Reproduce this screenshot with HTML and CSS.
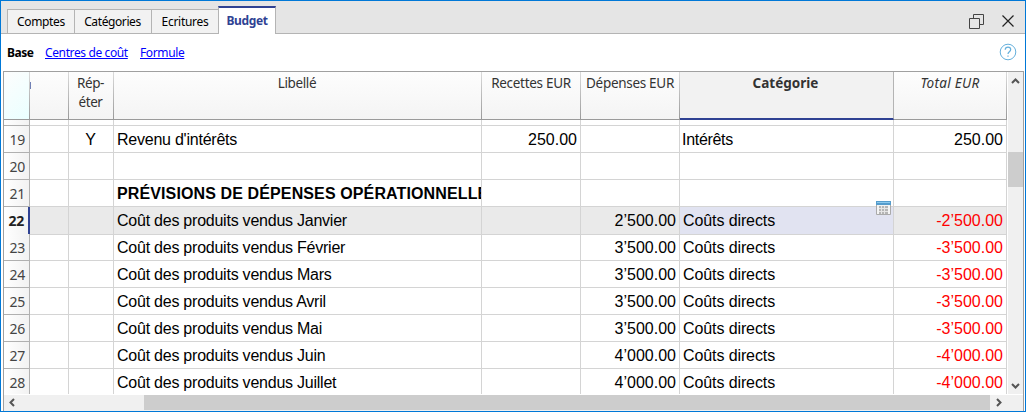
FILE: index.html
```html
<!DOCTYPE html>
<html lang="fr">
<head>
<meta charset="utf-8">
<title>Budget</title>
<link rel="stylesheet" href="styles.css">
</head>
<body>
<div class="window">
  <header class="tabbar">
    <nav class="tabs">
      <div class="tab t-comptes"><span>Comptes</span></div>
      <div class="tab t-categories"><span>Catégories</span></div>
      <div class="tab t-ecritures"><span>Ecritures</span></div>
      <div class="tab active"><span>Budget</span></div>
    </nav>
    <div class="controls">
      <svg width="16" height="16" viewBox="0 0 16 16" fill="none" stroke="#444"><path d="M.5 4.500h10v10H.5zM4.500 4.500v-4h10v10h-4"/></svg>
      <svg width="12" height="12" viewBox="0 0 12 12" fill="none" stroke="#222" stroke-width="1.200"><path d="M.5.5l11 11M11.500.5l-11 11"/></svg>
    </div>
  </header>
  <div class="views">
    <b>Base</b><a class="v-centres">Centres de coût</a><a class="v-formule">Formule</a>
    <svg class="help" width="18" height="18" viewBox="0 0 18 18" fill="none" stroke="#65b0dc"><circle cx="9" cy="9" r="7.800"/><path d="M6.200 6.800C6.300 5 7.400 4.200 9 4.200s2.700.9 2.700 2.300c0 2.300-2.700 2.100-2.700 4.500M9 12.500v1.300" stroke-width="1.200"/></svg>
  </div>
  <div class="panel">
    <div class="grid">
      <div class="row head">
        <div class="corner"></div><div><i class="cut"></i></div><div class="rep">Rép-<br>éter</div><div class="lib">Libellé</div><div>Recettes EUR</div><div>Dépenses EUR</div><div class="cur">Catégorie</div><div class="tot">Total EUR</div>
      </div>
      <div class="row part"><div class="n"></div><div></div><div></div><div></div><div></div><div></div><div></div><div></div></div>
      <div class="row"><div class="n">19</div><div></div><div class="c">Y</div><div class="t">Revenu d'intérêts</div><div class="r">250.00</div><div class="r"></div><div class="i">Intérêts</div><div class="r">250.00</div></div>
      <div class="row"><div class="n">20</div><div></div><div></div><div></div><div></div><div></div><div></div><div></div></div>
      <div class="row"><div class="n">21</div><div></div><div></div><div class="title">PRÉVISIONS DE DÉPENSES OPÉRATIONNELLES</div><div></div><div></div><div></div><div></div></div>
      <div class="row selected"><div class="n">22</div><div></div><div></div><div class="t">Coût des produits vendus Janvier</div><div></div><div class="r">2’500.00</div><div class="k cell">Coûts directs
        <svg class="picker" width="15" height="14" viewBox="0 0 15 14"><path d="M.5.5h14v13H.5z" fill="#f4f4f4" stroke="#aaa"/><path d="M0 0h15v4H0z" fill="#559ccc"/><path d="M1 1h13v1H1z" fill="#8bc9ed"/><path d="M3 5h9v8H3z" fill="#b5b5b5"/><path d="M3 7.500h9M3 10.500h9M5.500 5v8M8.500 5v8" stroke="#e5e5e5"/></svg></div><div class="r neg">-2’500.00</div></div>
      <div class="row"><div class="n">23</div><div></div><div></div><div class="t">Coût des produits vendus Février</div><div></div><div class="r">3’500.00</div><div class="k">Coûts directs</div><div class="r neg">-3’500.00</div></div>
      <div class="row"><div class="n">24</div><div></div><div></div><div class="t">Coût des produits vendus Mars</div><div></div><div class="r">3’500.00</div><div class="k">Coûts directs</div><div class="r neg">-3’500.00</div></div>
      <div class="row"><div class="n">25</div><div></div><div></div><div class="t">Coût des produits vendus Avril</div><div></div><div class="r">3’500.00</div><div class="k">Coûts directs</div><div class="r neg">-3’500.00</div></div>
      <div class="row"><div class="n">26</div><div></div><div></div><div class="t">Coût des produits vendus Mai</div><div></div><div class="r">3’500.00</div><div class="k">Coûts directs</div><div class="r neg">-3’500.00</div></div>
      <div class="row"><div class="n">27</div><div></div><div></div><div class="t">Coût des produits vendus Juin</div><div></div><div class="r">4’000.00</div><div class="k">Coûts directs</div><div class="r neg">-4’000.00</div></div>
      <div class="row"><div class="n">28</div><div></div><div></div><div class="t">Coût des produits vendus Juillet</div><div></div><div class="r">4’000.00</div><div class="k">Coûts directs</div><div class="r neg">-4’000.00</div></div>
    </div>
    <div class="vscroll">
      <svg width="9" height="6" viewBox="0 0 9 6"><path d="M1 5l3.500-3.500L8 5"/></svg>
      <div class="thumb"></div>
      <svg width="9" height="6" viewBox="0 0 9 6"><path d="M1 1l3.500 3.500L8 1"/></svg>
    </div>
    <div class="hscroll">
      <svg width="6" height="9" viewBox="0 0 6 9"><path d="M5 1L1.500 4.500 5 8"/></svg>
      <div class="thumb"></div>
      <svg width="6" height="9" viewBox="0 0 6 9"><path d="M1 1l3.500 3.500L1 8"/></svg>
    </div>
  </div>
</div>
</body>
</html>
```
FILE: styles.css
```css
* { box-sizing: border-box; }
body { margin: 0; background: #fff; }
svg { display: block; flex: none; }

.window {
  width: 1026px; height: 412px;
  border: 1px solid #0078d7;
  display: flex; flex-direction: column;
  overflow: hidden;
  font: 12px/16px "Noto Sans", "Open Sans", sans-serif;
  color: #000;
}

/* Tabs */
.tabbar {
  height: 33px; flex: none;
  display: flex; justify-content: space-between;
  background: linear-gradient(#b4b4b4, #b4b4b4) bottom / 100% 1px no-repeat #e5e5e5;
}
.tabs { display: flex; align-items: flex-end; padding-left: 6px; }
.tab {
  height: 25px;
  display: flex; align-items: center; justify-content: center;
  white-space: nowrap;
  background: #f2f2f2;
  border: 1px solid #b4b4b4; border-right: 0;
}
.t-comptes { width: 67px; letter-spacing: -.35px; }
.t-categories { width: 77px; letter-spacing: -.4px; padding-right: 1px; }
.t-ecritures { width: 67px; letter-spacing: -.3px; }
.tab.active {
  width: 58px; height: 28px;
  background: #fff; color: #2f4293; font-weight: bold; letter-spacing: -.4px;
  border: 1px solid #b4b4b4; border-top: 2px solid #2f4293; border-bottom: 0;
}
.controls { display: flex; gap: 17px; padding: 13px 11px 0 0; }
.controls svg:last-child { margin-top: 1px; }

/* View links */
.views {
  height: 37px; flex: none;
  display: flex; align-items: center;
  padding: 1px 8px 0 6px;
}
.views b { width: 38px; letter-spacing: -.5px; }
.views a { color: #00f; text-decoration: underline; letter-spacing: -.38px; }
.v-centres { width: 95px; }
.help { margin: -2px 0 0 auto; }

/* Table panel */
.panel {
  flex: 1; min-height: 0; margin: 0 1px 0 2px;
  border: 1px solid #a0a0a0; border-bottom: 0;
  display: grid;
  grid-template-columns: 1004px 15px; grid-template-rows: 322px 1px 17px;
  background: #fff;
}
.grid { overflow: hidden; height: 322px; }
.row {
  display: grid; width: 1003px; height: 27px;
  grid-template-columns: 26px 39px 45px 368px 99px 99px 214px 113px;
  font: 16px/27px "Liberation Sans", Arial, sans-serif;
}
.row > div {
  min-width: 0; overflow: hidden; white-space: nowrap;
  border-right: 1px solid #d4d4d4; border-bottom: 1px solid #d4d4d4;
  padding-left: 3px;
}
.row > .n {
  background: linear-gradient(90deg, #fff, #f2f2f2);
  border-right-color: #b0b0b0; border-bottom-color: #b0b0b0;
  font: 14px/27px "Noto Sans", sans-serif; letter-spacing: -.3px; color: #444;
  padding: 0 4px 0 0; text-align: right;
}
.row > .c { text-align: center; padding: 0 1px 0 0; }
.row > .r { text-align: right; padding: 0 3px 0 0; }
.row > .t { letter-spacing: -.235px; }
.row > .i { padding-left: 2px; letter-spacing: -.3px; }
.row > .k { padding-left: 3px; letter-spacing: -.1px; }
.row > .neg { color: #f00; }
.row > .title { font-weight: bold; letter-spacing: .12px; }
.part { height: 6px; }

.head { height: 48px; background: linear-gradient(#fdfdfd, #f4f4f4); }
.head > div {
  border-right: 1px solid; border-bottom: 1px solid #a8a8a8;
  border-image: linear-gradient(#dcdcdc, #999) 1;
  padding: 2px 0 0;
  font: 13.5px/19px "Noto Sans", sans-serif; letter-spacing: -.3px;
  color: #333; text-align: center;
}
.head > .rep, .head > .lib { letter-spacing: -.4px; padding-right: 1px; }
.head > .corner { background: linear-gradient(135deg, #fdfdfd, #eaffff); }
.head > .cur { background: #f2f2f2; font-weight: bold; color: #333; letter-spacing: 0; border-image: none; border-right-color: #b4b4b4; border-bottom: 2px solid #2f4293; padding-right: 2px; }
.head > .tot { font-style: italic; letter-spacing: .3px; }
.cut { display: block; width: 1px; height: 7px; margin-top: 8px; background: #7180b5; }

.selected { background: #eaeaea; }
.row.selected > .n { font-weight: bold; color: #222; border-right: 2px solid #2f4293; padding-right: 4px; }
.row.selected > .cell { position: relative; overflow: visible; background: #e1e3f1; }
.picker { position: absolute; right: 2px; top: -6px; }

/* Scrollbars */
.vscroll, .hscroll { background: #f0f0f0; display: flex; align-items: center; }
.vscroll { flex-direction: column; padding: 6px 0 5px; }
.vscroll svg, .hscroll svg { fill: none; stroke: #555; stroke-width: 2; }
.vscroll .thumb { width: 15px; height: 35px; background: #cdcdcd; margin: 68px 0 auto; }
.hscroll { grid-row: 3; grid-column: 1 / 3; padding: 0 21px 2px 5px; justify-content: space-between; }
.hscroll .thumb { width: 846px; height: 15px; background: #cdcdcd; margin-left: 122px; }
```
